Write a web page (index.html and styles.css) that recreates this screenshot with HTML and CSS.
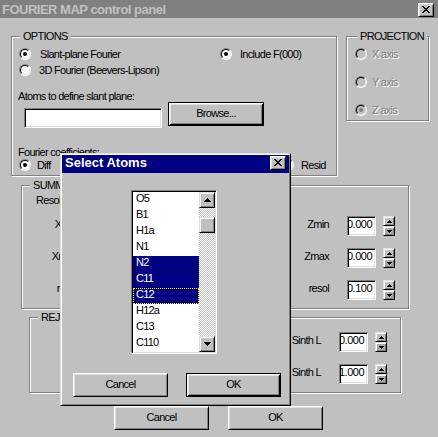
FILE: index.html
```html
<!DOCTYPE html>
<html>
<head>
<meta charset="utf-8">
<link rel="stylesheet" href="styles.css">
</head>
<body>
<div class="window">
  <div class="titlebar">
    <span class="title">FOURIER MAP control panel</span>
    <span class="tbtn"><svg width="8" height="7" viewBox="0 0 8 7"><path d="M0 0h2v1H0zM6 0h2v1H6zM1 1h2v1H1zM5 1h2v1H5zM2 2h4v1H2zM3 3h2v1H3zM2 4h4v1H2zM1 5h2v1H1zM5 5h2v1H5zM0 6h2v1H0zM6 6h2v1H6z" fill="#000"/></svg></span>
  </div>
  <div class="client">
    <div class="toprow">
      <div class="group options">
        <span class="legend">OPTIONS</span>
        <div class="opt-row1">
          <div class="ritem"><span class="radio checked"></span><span class="lbl">Slant-plane Fourier</span></div>
          <div class="ritem"><span class="radio checked"></span><span class="lbl l8">Include F(000)</span></div>
        </div>
        <div class="opt-row2">
          <div class="ritem"><span class="radio"></span><span class="lbl l8">3D Fourier (Beevers-Lipson)</span></div>
        </div>
        <div class="atoms-label">Atoms to define slant plane:</div>
        <div class="input-row">
          <div class="textbox wide"></div>
          <div class="btn default browse">Browse...</div>
        </div>
        <div class="coef-label">Fourier coefficients:</div>
        <div class="coef-row">
          <div class="ritem"><span class="radio checked"></span><span class="lbl l6">Diff</span></div>
          <div class="ritem"><span class="radio"></span><span class="lbl l7">Resid</span></div>
        </div>
      </div>
      <div class="group projection">
        <span class="legend">PROJECTION</span>
        <div class="ritem"><span class="radio disabled"></span><span class="lbl l5 dis">X axis</span></div>
        <div class="ritem"><span class="radio disabled"></span><span class="lbl l5 dis">Y axis</span></div>
        <div class="ritem"><span class="radio disabled checked"></span><span class="lbl l5 dis">Z axis</span></div>
      </div>
    </div>

    <div class="group summation">
      <span class="legend">SUMMATION</span>
      <div class="sum-head">Resolution</div>
      <div class="sum-rows">
        <div class="sum-row">
          <div class="field"><span class="flabel">Xmin</span><div class="textbox num">0.000</div><div class="spin"><span class="sp up"><svg width="5" height="3" viewBox="0 0 5 3"><path d="M2 0h1v1h1v1h1v1H0V2h1V1h1z"/></svg></span><span class="sp dn"><svg width="5" height="3" viewBox="0 0 5 3"><path d="M0 0h5v1H4v1H3v1H2V2H1V1H0z"/></svg></span></div></div>
          <div class="field"><span class="flabel">Ymin</span><div class="textbox num">0.000</div><div class="spin"><span class="sp up"><svg width="5" height="3" viewBox="0 0 5 3"><path d="M2 0h1v1h1v1h1v1H0V2h1V1h1z"/></svg></span><span class="sp dn"><svg width="5" height="3" viewBox="0 0 5 3"><path d="M0 0h5v1H4v1H3v1H2V2H1V1H0z"/></svg></span></div></div>
          <div class="field"><span class="flabel">Zmin</span><div class="textbox num">0.000</div><div class="spin"><span class="sp up"><svg width="5" height="3" viewBox="0 0 5 3"><path d="M2 0h1v1h1v1h1v1H0V2h1V1h1z"/></svg></span><span class="sp dn"><svg width="5" height="3" viewBox="0 0 5 3"><path d="M0 0h5v1H4v1H3v1H2V2H1V1H0z"/></svg></span></div></div>
        </div>
        <div class="sum-row">
          <div class="field"><span class="flabel">Xmax</span><div class="textbox num">1.000</div><div class="spin"><span class="sp up"><svg width="5" height="3" viewBox="0 0 5 3"><path d="M2 0h1v1h1v1h1v1H0V2h1V1h1z"/></svg></span><span class="sp dn"><svg width="5" height="3" viewBox="0 0 5 3"><path d="M0 0h5v1H4v1H3v1H2V2H1V1H0z"/></svg></span></div></div>
          <div class="field"><span class="flabel">Ymax</span><div class="textbox num">1.000</div><div class="spin"><span class="sp up"><svg width="5" height="3" viewBox="0 0 5 3"><path d="M2 0h1v1h1v1h1v1H0V2h1V1h1z"/></svg></span><span class="sp dn"><svg width="5" height="3" viewBox="0 0 5 3"><path d="M0 0h5v1H4v1H3v1H2V2H1V1H0z"/></svg></span></div></div>
          <div class="field"><span class="flabel">Zmax</span><div class="textbox num">0.000</div><div class="spin"><span class="sp up"><svg width="5" height="3" viewBox="0 0 5 3"><path d="M2 0h1v1h1v1h1v1H0V2h1V1h1z"/></svg></span><span class="sp dn"><svg width="5" height="3" viewBox="0 0 5 3"><path d="M0 0h5v1H4v1H3v1H2V2H1V1H0z"/></svg></span></div></div>
        </div>
        <div class="sum-row">
          <div class="field"><span class="flabel">resol</span><div class="textbox num">0.100</div><div class="spin"><span class="sp up"><svg width="5" height="3" viewBox="0 0 5 3"><path d="M2 0h1v1h1v1h1v1H0V2h1V1h1z"/></svg></span><span class="sp dn"><svg width="5" height="3" viewBox="0 0 5 3"><path d="M0 0h5v1H4v1H3v1H2V2H1V1H0z"/></svg></span></div></div>
          <div class="field"><span class="flabel">resol</span><div class="textbox num">0.100</div><div class="spin"><span class="sp up"><svg width="5" height="3" viewBox="0 0 5 3"><path d="M2 0h1v1h1v1h1v1H0V2h1V1h1z"/></svg></span><span class="sp dn"><svg width="5" height="3" viewBox="0 0 5 3"><path d="M0 0h5v1H4v1H3v1H2V2H1V1H0z"/></svg></span></div></div>
          <div class="field"><span class="flabel">resol</span><div class="textbox num">0.100</div><div class="spin"><span class="sp up"><svg width="5" height="3" viewBox="0 0 5 3"><path d="M2 0h1v1h1v1h1v1H0V2h1V1h1z"/></svg></span><span class="sp dn"><svg width="5" height="3" viewBox="0 0 5 3"><path d="M0 0h5v1H4v1H3v1H2V2H1V1H0z"/></svg></span></div></div>
        </div>
      </div>
    </div>

    <div class="group rej">
      <span class="legend">REJECTION</span>
      <div class="rej-rows">
        <div class="field"><span class="flabel wide">Min Sinth L</span><div class="textbox num">0.000</div><div class="spin"><span class="sp up"><svg width="5" height="3" viewBox="0 0 5 3"><path d="M2 0h1v1h1v1h1v1H0V2h1V1h1z"/></svg></span><span class="sp dn"><svg width="5" height="3" viewBox="0 0 5 3"><path d="M0 0h5v1H4v1H3v1H2V2H1V1H0z"/></svg></span></div></div>
        <div class="field"><span class="flabel wide">Max Sinth L</span><div class="textbox num">1.000</div><div class="spin"><span class="sp up"><svg width="5" height="3" viewBox="0 0 5 3"><path d="M2 0h1v1h1v1h1v1H0V2h1V1h1z"/></svg></span><span class="sp dn"><svg width="5" height="3" viewBox="0 0 5 3"><path d="M0 0h5v1H4v1H3v1H2V2H1V1H0z"/></svg></span></div></div>
      </div>
    </div>

    <div class="main-buttons">
      <div class="btn">Cancel</div>
      <div class="btn">OK</div>
    </div>
  </div>

  <div class="dialog">
    <div class="dlg-title">
      <span class="dt">Select Atoms</span>
      <span class="tbtn dclose"><svg width="8" height="7" viewBox="0 0 8 7"><path d="M0 0h2v1H0zM6 0h2v1H6zM1 1h2v1H1zM5 1h2v1H5zM2 2h4v1H2zM3 3h2v1H3zM2 4h4v1H2zM1 5h2v1H1zM5 5h2v1H5zM0 6h2v1H0zM6 6h2v1H6z" fill="#000"/></svg></span>
    </div>
    <div class="dlg-body">
      <div class="listbox">
        <div class="items">
          <div class="item">O5</div>
          <div class="item">B1</div>
          <div class="item">H1a</div>
          <div class="item">N1</div>
          <div class="item sel">N2</div>
          <div class="item sel">C11</div>
          <div class="item sel focus">C12</div>
          <div class="item">H12a</div>
          <div class="item">C13</div>
          <div class="item">C110</div>
        </div>
        <div class="vscroll">
          <div class="sb-btn"><svg width="7" height="4" viewBox="0 0 7 4"><path d="M3 0h1v1h1v1h1v1h1v1H0V3h1V2h1V1h1z"/></svg></div>
          <div class="sb-btn thumb"></div>
          <div class="sb-space"></div>
          <div class="sb-btn"><svg width="7" height="4" viewBox="0 0 7 4"><path d="M0 0h7v1H6v1H5v1H4v1H3V3H2V2H1V1H0z"/></svg></div>
        </div>
      </div>
      <div class="dlg-buttons">
        <div class="btn">Cancel</div>
        <div class="btn default">OK</div>
      </div>
    </div>
  </div>
</div>
</body>
</html>
```

FILE: styles.css
```css
body {
  margin: 0;
  background: #c0c0c0;
  font-family: "Liberation Sans", Arial, sans-serif;
  font-size: 11px;
  line-height: 12px;
  letter-spacing: -0.7px;
  color: #000;
}

.window {
  position: relative;
  width: 438px;
  height: 437px;
  overflow: hidden;
}

.titlebar {
  height: 18px;
  background: #808080;
  display: flex;
  justify-content: space-between;
  align-items: flex-start;
}

.title {
  font-weight: bold;
  font-size: 13px;
  line-height: 18px;
  letter-spacing: -0.5px;
  color: #c0c0c0;
  padding: 1px 0 0 2px;
  white-space: nowrap;
}

.tbtn {
  width: 16px;
  height: 14px;
  margin: 3px 4px 0 0;
  box-sizing: border-box;
  background: #c0c0c0;
  border: 1px solid;
  border-color: #fff #000 #000 #fff;
  box-shadow: inset 1px 1px #dfdfdf, inset -1px -1px #808080;
  display: flex;
  align-items: center;
  justify-content: center;
  padding-bottom: 1px;
}

.client {
  padding: 18px 0 0 11px;
}

.toprow {
  display: flex;
  align-items: flex-start;
  gap: 9px;
}

.group {
  position: relative;
  box-sizing: border-box;
  border: 1px solid #808080;
  box-shadow: inset 1px 1px #fff, 1px 1px #fff;
}

.legend {
  position: absolute;
  top: -7px;
  left: 8px;
  padding: 0 3px;
  background: #c0c0c0;
  line-height: 12px;
  white-space: nowrap;
}

/* radios */
.ritem {
  display: flex;
  align-items: center;
  height: 12px;
}

.lbl {
  margin-left: 9px;
  white-space: nowrap;
}
.lbl.l8 { margin-left: 8px; }
.lbl.l7 { margin-left: 7px; }
.lbl.l6 { margin-left: 6px; }
.lbl.l5 { margin-left: 5px; }

.dis {
  color: #808080;
  text-shadow: 1px 1px 0 #fff;
}

.radio {
  position: relative;
  flex: none;
  width: 12px;
  height: 12px;
  box-sizing: border-box;
  border-radius: 50%;
  border: 1px solid;
  border-color: #808080 #fff #fff #808080;
  background: #fff;
}
.radio::before {
  content: "";
  position: absolute;
  inset: 0;
  border-radius: 50%;
  border: 1px solid;
  border-color: #000 #dfdfdf #dfdfdf #000;
}
.radio.checked::after {
  content: "";
  position: absolute;
  left: 3px;
  top: 3px;
  width: 4px;
  height: 4px;
  border-radius: 50%;
  background: #000;
}
.radio.disabled { background: #c0c0c0; }
.radio.disabled.checked::after { background: #808080; }

/* options */
.options {
  width: 326px;
  height: 140px;
  padding-top: 11px;
}
.opt-row1 {
  display: grid;
  grid-template-columns: 201px auto;
  padding-left: 7px;
}
.opt-row2 {
  margin-top: 4px;
  padding-left: 7px;
}
.atoms-label {
  margin-top: 15px;
  padding-left: 6px;
  line-height: 11px;
  height: 11px;
}
.input-row {
  display: flex;
  align-items: flex-start;
  padding-left: 12px;
  gap: 6px;
}
.coef-label {
  margin-top: 18px;
  padding-left: 6px;
}
.coef-row {
  margin-top: 1px;
  display: grid;
  grid-template-columns: 263px auto;
  padding-left: 7px;
}

.textbox {
  box-sizing: border-box;
  background: #fff;
  border: 1px solid;
  border-color: #808080 #fff #fff #808080;
  box-shadow: inset 1px 1px #000, inset -1px -1px #dfdfdf;
  padding: 1px 0 0 0;
}
.textbox.wide {
  width: 138px;
  height: 20px;
  margin-top: 6px;
}
.textbox.num {
  width: 29px;
  height: 20px;
  margin-right: 7px;
  line-height: 12px;
  letter-spacing: -0.5px;
  text-indent: -1px;
  overflow: hidden;
  white-space: nowrap;
}

/* buttons */
.btn {
  box-sizing: border-box;
  width: 95px;
  height: 24px;
  background: #c0c0c0;
  border: 1px solid;
  border-color: #fff #000 #000 #fff;
  box-shadow: inset 1px 1px #dfdfdf, inset -1px -1px #808080;
  display: flex;
  align-items: center;
  justify-content: center;
  padding-bottom: 3px;
  white-space: nowrap;
}
.btn.default {
  border-color: #000;
  box-shadow: inset 1px 1px #fff, inset -1px -1px #000, inset 2px 2px #dfdfdf, inset -2px -2px #808080;
}
.btn.browse {
  width: 96px;
}

/* projection */
.projection {
  width: 83px;
  height: 85px;
  padding: 11px 0 0 8px;
  display: flex;
  flex-direction: column;
  gap: 16px;
}
.projection .legend { left: 10px; }

/* summation */
.summation {
  margin: 9px 0 0 10px;
  width: 388px;
  height: 124px;
  padding-top: 8px;
}
.sum-head {
  padding-left: 14px;
}
.sum-rows {
  margin-top: 10px;
  padding-left: 5px;
  display: flex;
  flex-direction: column;
  gap: 12px;
}
.sum-row {
  display: flex;
  gap: 10px;
}
.field {
  display: flex;
  align-items: flex-start;
}
.flabel {
  width: 50px;
  text-align: right;
  margin: 2px 18px 0 0;
  white-space: nowrap;
}
.flabel.wide { width: 60px; }

.spin {
  width: 12px;
  height: 20px;
  display: flex;
  flex-direction: column;
}
.sp {
  box-sizing: border-box;
  height: 10px;
  border: 1px solid;
  border-color: #dfdfdf #000 #000 #dfdfdf;
  box-shadow: inset 1px 1px #fff, inset -1px -1px #808080;
  background: #c0c0c0;
  display: flex;
  align-items: center;
  justify-content: center;
}
.sp.dn { background: #a8a8a8; }
.sp svg { fill: #000; }

/* rejection */
.rej {
  margin: 8px 0 0 18px;
  width: 372px;
  height: 76px;
  padding: 14px 0 0 231px;
}
.rej-rows {
  display: flex;
  flex-direction: column;
  gap: 12px;
}

.main-buttons {
  margin-top: 13px;
  padding-left: 103px;
  display: flex;
  gap: 19px;
}

/* dialog */
.dialog {
  position: absolute;
  left: 60px;
  top: 153px;
  width: 231px;
  height: 253px;
  box-sizing: border-box;
  border: 1px solid;
  border-color: #dfdfdf #000 #000 #dfdfdf;
  box-shadow: inset 1px 1px #fff, inset -1px -1px #808080;
  padding: 1px;
  background: #c0c0c0;
}
.dlg-title {
  height: 18px;
  background: #000080;
  display: flex;
  justify-content: space-between;
  align-items: center;
  padding-left: 3px;
}
.dt {
  font-weight: bold;
  font-size: 13px;
  line-height: 16px;
  letter-spacing: 0;
  color: #fff;
  margin-bottom: 3px;
  white-space: nowrap;
}
.tbtn.dclose {
  align-self: flex-start;
  margin: 1px 3px 0 0;
}
.dlg-body {
  padding-top: 17px;
}
.listbox {
  margin-left: 69px;
  width: 86px;
  height: 164px;
  box-sizing: border-box;
  border: 1px solid;
  border-color: #808080 #fff #fff #808080;
  box-shadow: inset 1px 1px #000, inset -1px -1px #dfdfdf;
  padding: 1px;
  display: flex;
  background: #fff;
}
.items {
  width: 66px;
}
.item {
  box-sizing: border-box;
  height: 16px;
  line-height: 13px;
  padding-left: 3px;
  letter-spacing: -0.8px;
}
.item.sel {
  background: #000080;
  color: #fff;
}
.item.focus {
  outline: 1px dotted #ffff00;
  outline-offset: -1px;
}
.vscroll {
  width: 16px;
  display: flex;
  flex-direction: column;
  background-color: #c0c0c0;
  background-image: conic-gradient(#fff 25%, #c0c0c0 0 50%, #fff 0 75%, #c0c0c0 0);
  background-size: 2px 2px;
}
.sb-btn {
  box-sizing: border-box;
  width: 16px;
  height: 16px;
  flex: none;
  background: #c0c0c0;
  border: 1px solid;
  border-color: #dfdfdf #000 #000 #dfdfdf;
  box-shadow: inset 1px 1px #fff, inset -1px -1px #808080;
  display: flex;
  align-items: center;
  justify-content: center;
}
.sb-btn svg { fill: #000; }
.sb-btn.thumb {
  margin-top: 9px;
}
.sb-space {
  flex: 1;
}
.dlg-buttons {
  margin-top: 19px;
  padding-left: 11px;
  display: flex;
  gap: 18px;
}
```
